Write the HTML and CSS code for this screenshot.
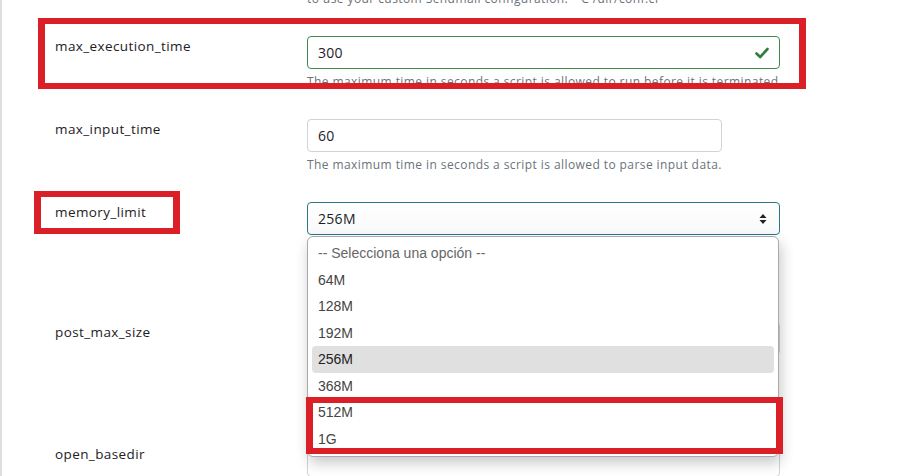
FILE: index.html
```html
<!DOCTYPE html>
<html>
<head>
<meta charset="utf-8">
<link rel="stylesheet" href="styles.css">
</head>
<body>
<div class="page">
  <div class="row row-top">
    <div></div>
    <div class="help">to use your custom Sendmail configuration: "-C /dir/conf.cf"</div>
  </div>

  <div class="row">
    <div class="label">max_execution_time</div>
    <div class="control">
      <div class="field valid">
        <span class="value">300</span>
        <svg class="check" width="14" height="12" viewBox="0 0 14 12"><path d="M1.5 6.5 L5.2 10 L12.5 2" fill="none" stroke="#2f7d3e" stroke-width="2.6" stroke-linecap="round" stroke-linejoin="round"/></svg>
      </div>
      <div class="help">The maximum time in seconds a script is allowed to run before it is terminated.</div>
    </div>
  </div>

  <div class="row">
    <div class="label">max_input_time</div>
    <div class="control">
      <div class="field short"><span class="value">60</span></div>
      <div class="help">The maximum time in seconds a script is allowed to parse input data.</div>
    </div>
  </div>

  <div class="row row-tall">
    <div class="label">memory_limit</div>
    <div class="control">
      <div class="field select focus">
        <span class="value">256M</span>
        <svg class="sort" width="8" height="12" viewBox="0 0 8 12"><path d="M0.5 5 L4 1 L7.5 5 Z M0.5 7 L4 11 L7.5 7 Z" fill="#222"/></svg>
      </div>
    </div>
  </div>

  <div class="row row-tall2">
    <div class="label">post_max_size</div>
    <div class="control">
      <div class="field select"></div>
    </div>
  </div>

  <div class="row">
    <div class="label">open_basedir</div>
    <div class="control">
      <div class="field"></div>
    </div>
  </div>

  <div class="dropdown">
    <div class="opt placeholder">-- Selecciona una opción --</div>
    <div class="opt">64M</div>
    <div class="opt">128M</div>
    <div class="opt">192M</div>
    <div class="opt selected">256M</div>
    <div class="opt">368M</div>
    <div class="opt">512M</div>
    <div class="opt">1G</div>
  </div>

  <div class="mark mark-1"></div>
  <div class="mark mark-2"></div>
  <div class="mark mark-3"></div>
</div>
</body>
</html>
```

FILE: styles.css
```css
html, body {
  margin: 0;
  padding: 0;
  background: #fff;
  overflow: hidden;
}

.page {
  position: relative;
  height: 476px;
  overflow: hidden;
  border-left: 2px solid #dedede;
  font-family: "Open Sans", "Noto Sans", sans-serif;
  color: #1d2125;
}

.row {
  display: grid;
  grid-template-columns: 252px 473px;
  padding-left: 53px;
  margin-bottom: 28px;
}

.row-top {
  margin-top: -10px;
}

.row-tall {
  height: 120px;
  margin-bottom: 0;
}

.row-tall2 {
  height: 122px;
  margin-bottom: 0;
}

.label {
  font-size: 13.5px;
  letter-spacing: 0.4px;
  line-height: 20px;
}

.help {
  font-size: 12px;
  letter-spacing: 0.42px;
  line-height: 18px;
  margin-top: 4px;
  color: #6a737b;
  white-space: nowrap;
}

.row-top .help {
  margin-top: 0;
}

.field {
  box-sizing: border-box;
  height: 33px;
  border: 1px solid #ced4da;
  border-radius: 4px;
  background: #fff;
  display: flex;
  align-items: center;
  justify-content: space-between;
  padding: 0 10px;
  font-size: 14px;
  letter-spacing: 0.3px;
  color: #1d2125;
}

.field.short {
  width: 415px;
}

.field.valid {
  border-color: #3d8b4f;
}

.field.focus {
  border-color: #2c7686;
  background: linear-gradient(#ffffff, #f8f9fa);
  padding-right: 12px;
}

.dropdown {
  position: absolute;
  left: 305px;
  top: 236px;
  width: 472px;
  box-sizing: border-box;
  padding: 3px 4px 4px;
  background: #fff;
  border: 1px solid #a9a9a9;
  border-radius: 6px;
  box-shadow: 2px 6px 14px rgba(0, 0, 0, 0.22);
  font-family: "Liberation Sans", Arial, sans-serif;
  font-size: 14px;
}

.opt {
  height: 26.5px;
  line-height: 26.5px;
  padding-left: 6px;
  color: #444;
  border-radius: 4px;
}

.opt.placeholder {
  color: #666;
}

.opt.selected {
  background: #e0e0e0;
  color: #222;
}

.mark {
  position: absolute;
  box-sizing: border-box;
  border: 6px solid #da1f26;
  border-left-width: 7px;
  border-right-width: 7px;
}

.mark-1 {
  left: 36px;
  top: 18px;
  width: 768px;
  height: 71px;
}

.mark-2 {
  left: 32px;
  top: 191px;
  width: 146px;
  height: 43px;
}

.mark-3 {
  left: 304px;
  top: 397px;
  width: 477px;
  height: 57px;
}
```
